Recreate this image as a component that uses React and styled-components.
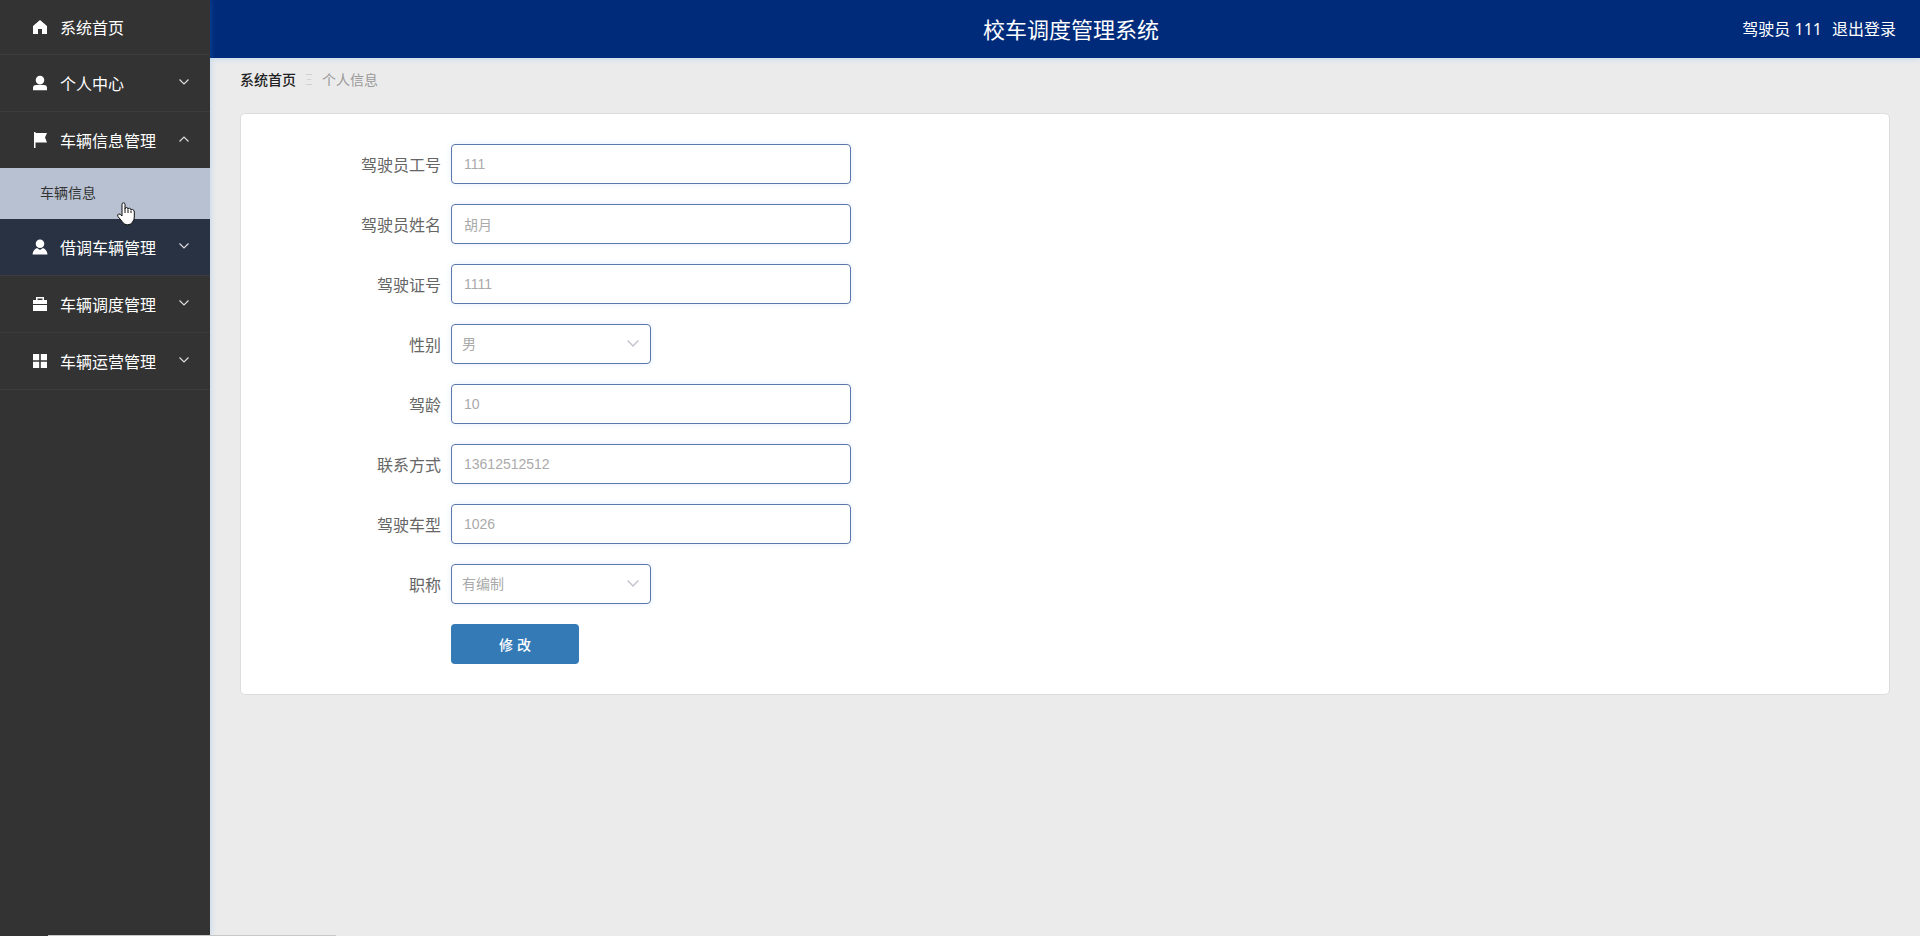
import React, { useState } from 'react'
import styled, { createGlobalStyle } from 'styled-components'

const GlobalStyle = createGlobalStyle`
  * { box-sizing: border-box; }
  body {
    margin: 0;
    background: #ebebeb;
    font-family: 'Liberation Sans', 'Noto Sans CJK SC', sans-serif;
    font-size: 14px;
  }
  a { color: inherit; text-decoration: none; }
  ul { list-style: none; margin: 0; padding: 0; }
`

const Page = styled.div`
  display: flex;
  min-height: 100vh;
`

const Side = styled.nav`
  position: relative;
  flex: 0 0 210px;
  background: #333;
  box-shadow: 0 0 6px rgba(64, 158, 255, .3);
  z-index: 1;
`

const MenuButton = styled.button`
  display: flex;
  align-items: center;
  width: 100%;
  height: ${(props) => (props.$first ? '55px' : props.$open ? '56px' : '57px')};
  padding: 0 21px 0 32px;
  border: 0;
  border-bottom: ${(props) => (props.$open ? '0' : '1px solid #3c3c3c')};
  background: ${(props) => (props.$hover ? '#283242' : 'transparent')};
  color: #fff;
  font-family: 'Noto Sans CJK SC', sans-serif;
  font-size: 16px;
  text-align: left;
  cursor: pointer;
  span { flex: 1; margin-left: 12px; }
  span + svg { margin-bottom: 3px; }
`

const SubLink = styled.a`
  display: flex;
  align-items: center;
  height: 51px;
  padding: 0 0 3px 40px;
  background: #b8c1d1;
  color: #333;
`

const Main = styled.div`
  flex: 1;
  min-width: 0;
`

const Header = styled.header`
  display: grid;
  grid-template-columns: 1fr auto 1fr;
  align-items: center;
  height: 58px;
  padding: 0 24px 3px 36px;
  background: #002b7b;
  color: #fff;
  font-family: 'Noto Sans', 'Noto Sans CJK SC', sans-serif;
  box-shadow: 0 0 6px rgba(64, 158, 255, .3);
  h1 {
    grid-column: 2;
    margin: 0;
    font-size: 22px;
    font-weight: 400;
  }
`

const UserBar = styled.div`
  display: flex;
  justify-content: flex-end;
  gap: 10px;
  font-size: 16px;
`

const Content = styled.main`
  padding: 0 30px 30px;
`

const Crumbs = styled.nav`
  display: flex;
  align-items: center;
  gap: 9px;
  height: 42px;
  margin-bottom: 13px;
  color: #999;
  a { color: #222; font-weight: 500; }
  i {
    color: #ccc;
    font-family: 'Noto Sans CJK SC', sans-serif;
    font-style: normal;
    font-weight: 300;
  }
`

const Card = styled.form`
  display: flex;
  flex-direction: column;
  gap: 20px;
  padding: 30px 0;
  border: 1px solid #ddd;
  border-radius: 5px;
  background: #fff;
`

const Row = styled.div`
  display: grid;
  grid-template-columns: 200px 1fr;
  column-gap: 10px;
  align-items: center;
  label {
    color: #666;
    font-size: 16px;
    text-align: right;
  }
`

const Input = styled.input`
  width: 400px;
  height: 40px;
  padding: 0 12px;
  border: 1px solid #5c77ab;
  border-radius: 4px;
  background: #fff;
  box-shadow: 0 0 6px #e6eefa;
  color: #aaa;
  font: inherit;
  outline: none;
`

const SelectBox = styled.div`
  display: grid;
  grid-template-columns: 1fr 24px;
  align-items: center;
  width: 200px;
  select, svg { grid-row: 1; }
  select {
    grid-column: 1 / 3;
    height: 40px;
    padding: 0 10px;
    border: 1px solid #5c77ab;
    border-radius: 4px;
    background: #fff;
    box-shadow: 0 0 6px #e6eefa;
    color: #aaa;
    font: inherit;
    appearance: none;
    outline: none;
  }
  svg { grid-column: 2; pointer-events: none; }
`

const SubmitButton = styled.button`
  grid-column: 2;
  width: 128px;
  height: 40px;
  border: 0;
  border-radius: 4px;
  background: #337ab7;
  color: #fff;
  font: inherit;
  font-weight: 500;
  cursor: pointer;
`

const Pointer = styled.svg`
  position: absolute;
  left: 117px;
  top: 202px;
`

const LoadBar = styled.div`
  position: fixed;
  left: 48px;
  bottom: 0;
  width: 288px;
  height: 1px;
  background: #c8c8c8;
  z-index: 2;
`

const icons = {
  home: <path d="M8 1 L15 7 V15 H10 V10 H6 V15 H1 V7 Z" />,
  user: <path d="M8 .8 a4.300 4.300 0 0 1 0 8.600 a4.300 4.300 0 0 1 0 -8.600 Z M4 10 H12 Q15 10 15 13 V15.300 H1 V13 Q1 10 4 10 Z" />,
  flag: <path d="M2 0 H3.500 V1 H15 L13 5.500 L15 10.500 H3.500 V16 H2 Z" />,
  custom: <path d="M8 .5 a4.300 4.300 0 0 1 0 8.600 a4.300 4.300 0 0 1 0 -8.600 Z M5 9 L8 11 L11 9 Q15 10.500 15.500 15.500 H.5 Q1 10.500 5 9 Z" />,
  bag: <path fillRule="evenodd" d="M4 4 V1 H12 V4 H15 V8 H1 V4 Z M5.500 4 H10.500 V2.500 H5.500 Z M1 9 H15 V15 H1 Z" />,
  grid: <path d="M1 1 H7.200 V7.200 H1 Z M8.800 1 H15 V7.200 H8.800 Z M1 8.800 H7.200 V15 H1 Z M8.800 8.800 H15 V15 H8.800 Z" />,
}

const menus = [
  { icon: 'home', text: '系统首页' },
  { icon: 'user', text: '个人中心', children: [] },
  { icon: 'flag', text: '车辆信息管理', children: ['车辆信息'] },
  { icon: 'custom', text: '借调车辆管理', children: [], hover: true },
  { icon: 'bag', text: '车辆调度管理', children: [] },
  { icon: 'grid', text: '车辆运营管理', children: [] },
]

const fields = [
  { id: 'gonghao', label: '驾驶员工号', value: '111' },
  { id: 'xingming', label: '驾驶员姓名', value: '胡月' },
  { id: 'zhenghao', label: '驾驶证号', value: '1111' },
  { id: 'xingbie', label: '性别', value: '男', options: ['男', '女'] },
  { id: 'jialing', label: '驾龄', value: '10' },
  { id: 'lianxi', label: '联系方式', value: '13612512512' },
  { id: 'chexing', label: '驾驶车型', value: '1026' },
  { id: 'zhicheng', label: '职称', value: '有编制', options: ['有编制', '无编制'] },
]

function Arrow({ up, color = '#ddd', size = 10 }) {
  return (
    <svg width={size} height={size * 0.6} viewBox="0 0 10 6" fill="none" stroke={color} strokeWidth="1.2">
      <path d={up ? 'M.5 5.500 L5 1 L9.500 5.500' : 'M.5 .5 L5 5 L9.500 .5'} />
    </svg>
  )
}

function App() {
  const [open, setOpen] = useState(2)
  const [form, setForm] = useState(Object.fromEntries(fields.map((e) => [e.id, e.value])))

  const onChange = (e) => setForm({ ...form, [e.target.id]: e.target.value })

  return (
    <>
      <GlobalStyle />
      <Page>
        <Side>
          <ul>
            {menus.map((e, i) => (
              <li key={e.text}>
                <MenuButton type="button" $first={i === 0} $open={open === i} $hover={e.hover} onClick={() => setOpen(open === i ? -1 : i)}>
                  <svg width="16" height="16" viewBox="0 0 16 16" fill="#fff">{icons[e.icon]}</svg>
                  <span>{e.text}</span>
                  {e.children && <Arrow up={open === i} />}
                </MenuButton>
                {open === i && e.children && e.children.map((c) => (
                  <SubLink href="#" key={c}>{c}</SubLink>
                ))}
              </li>
            ))}
          </ul>
          <Pointer width="18" height="24" viewBox="0 0 18 24" fill="#fff" stroke="#111">
            <path d="M5 14 V2.500 Q5 .8 6.500 .8 Q8 .8 8 2.500 V7 Q8 5.500 9.500 5.500 Q11 5.500 11 7.200 Q11.300 6 12.600 6.200 Q14 6.400 14 8 Q14.500 7.200 15.600 7.500 Q17.300 8 17.300 10 V15 Q17.300 18 15.500 20 Q14.500 22.800 10.500 22.800 Q7 22.800 5.500 20 L1 14.500 Q0 12.500 1.500 12 Q3 11.500 5 14 Z M8 7 V11 M11 7.500 V11 M14 8.500 V11" />
          </Pointer>
        </Side>
        <Main>
          <Header>
            <h1>校车调度管理系统</h1>
            <UserBar>
              <span>驾驶员 111</span>
              <a href="#">退出登录</a>
            </UserBar>
          </Header>
          <Content>
            <Crumbs>
              <a href="#">系统首页</a>
              <i>Ξ</i>
              <span>个人信息</span>
            </Crumbs>
            <Card onSubmit={(e) => e.preventDefault()}>
              {fields.map((e) => (
                <Row key={e.id}>
                  <label htmlFor={e.id}>{e.label}</label>
                  {e.options ? (
                    <SelectBox>
                      <select id={e.id} value={form[e.id]} onChange={onChange}>
                        {e.options.map((o) => <option key={o}>{o}</option>)}
                      </select>
                      <Arrow color="#c0c4cc" size={12} />
                    </SelectBox>
                  ) : (
                    <Input id={e.id} value={form[e.id]} onChange={onChange} />
                  )}
                </Row>
              ))}
              <Row>
                <SubmitButton type="submit">修 改</SubmitButton>
              </Row>
            </Card>
          </Content>
        </Main>
      </Page>
      <LoadBar />
    </>
  )
}

export default App
